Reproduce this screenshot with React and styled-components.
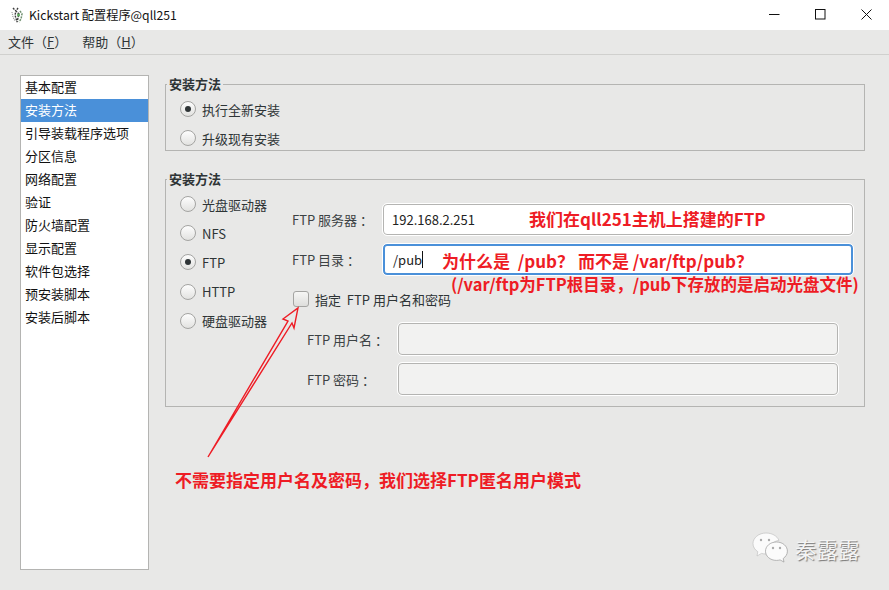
import React from 'react';
import styled, { createGlobalStyle } from 'styled-components';

const CJK = '"Noto Sans CJK SC", "Noto Sans", sans-serif';

const Global = createGlobalStyle`
  html, body { margin: 0; padding: 0; background: #e8e8e7; }
  body { font-family: ${CJK}; }
`;

const Window = styled.div`
  position: relative;
  width: 889px;
  height: 590px;
  overflow: hidden;
  background: #e8e8e7;
  color: #2e3436;
  font-size: 13px;
`;

const TitleBar = styled.div`
  display: flex;
  align-items: center;
  height: 30px;
  background: #fff;
  padding-left: 10px;
`;

const AppTitle = styled.span`
  margin: -1px 0 0 5px;
  font-size: 12.2px;
  color: #111;
  flex: 1;
`;

const WinButton = styled.div`
  display: flex;
  align-items: center;
  justify-content: center;
  width: 46px;
  height: 30px;
  margin-top: -2px;
`;

const MenuBar = styled.div`
  display: flex;
  align-items: center;
  gap: 15px;
  box-sizing: content-box;
  height: 22px;
  padding: 0 0 2px 8px;
  border-bottom: 1px solid #d0d0ce;
`;

const MenuItem = styled.span`
  font-size: 13px;
  color: #2e3436;
  u { text-decoration-thickness: 1px; }
`;

const Body = styled.div`
  display: flex;
  gap: 16px;
  padding: 20px 24px 0 20px;
`;

const Sidebar = styled.ul`
  list-style: none;
  margin: 0;
  padding: 0;
  width: 127px;
  height: 493px;
  background: #fff;
  border: 1px solid #b4b4b2;
`;

const SideItem = styled.li`
  display: flex;
  align-items: center;
  box-sizing: border-box;
  height: 23px;
  padding: 0 0 2px 4px;
  font-size: 13px;
  color: ${({ $active }) => ($active ? '#fff' : '#111')};
  background: ${({ $active }) => ($active ? '#4a90d9' : 'transparent')};
`;

const Main = styled.div`
  flex: 1;
  display: flex;
  flex-direction: column;
`;

const Group = styled.fieldset`
  margin: ${({ $top }) => $top}px 0 0;
  padding: 0;
  height: ${({ $height }) => $height}px;
  min-width: 0;
  box-sizing: border-box;
  border: 1px solid #b4b4b2;
`;

const Legend = styled.legend`
  margin-left: 1px;
  padding: 0 2px 2px;
  font-size: 13px;
  font-weight: 700;
  line-height: 15px;
  color: #2e3436;
`;

const RadioStack = styled.div`
  display: flex;
  flex-direction: column;
  gap: ${({ $gap }) => $gap}px;
  padding: ${({ $pad }) => $pad}px 0 0 14px;
  width: 110px;
  flex: none;
`;

const RadioRow = styled.div`
  display: flex;
  align-items: center;
  gap: 6px;
  height: 16px;
  font-size: 13px;
  white-space: nowrap;
`;

const RadioDot = styled.span`
  display: flex;
  align-items: center;
  justify-content: center;
  width: 16px;
  height: 16px;
  box-sizing: border-box;
  flex: none;
  border-radius: 50%;
  border: 1px solid #a4a4a2;
  background: linear-gradient(#fdfdfd, #e2e2e0);
  &::after {
    content: '';
    display: ${({ $on }) => ($on ? 'block' : 'none')};
    width: 6px;
    height: 6px;
    border-radius: 50%;
    background: #2e3436;
  }
`;

const InstallBody = styled.div`
  display: flex;
`;

const Form = styled.div`
  flex: 1;
  display: flex;
  flex-direction: column;
  padding: 16px 11px 0 0;
`;

const FieldRow = styled.div`
  display: flex;
  align-items: center;
  height: ${({ $h }) => $h}px;
  margin-top: ${({ $mt }) => $mt || 0}px;
  padding-left: ${({ $indent }) => $indent || 0}px;
  padding-right: ${({ $right }) => $right || 0}px;
`;

const FieldLabel = styled.label`
  width: 91px;
  flex: none;
  font-size: 13px;
  color: #3c4244;
  white-space: pre;
`;

const Input = styled.div`
  flex: 1;
  box-sizing: border-box;
  height: 100%;
  display: flex;
  align-items: center;
  padding-left: 8px;
  font-size: 13px;
  color: #222;
  background: ${({ $off }) => ($off ? '#f2f2f1' : '#fff')};
  border-style: solid;
  border-color: ${({ $focus }) => ($focus ? '#4a90d9' : '#b4b4b2')};
  border-width: ${({ $focus }) => ($focus ? 2 : 1)}px;
  border-radius: 4px;
  outline: 1px solid #fff;
  outline-offset: 0;
`;

const Caret = styled.span`
  display: inline-block;
  width: 1px;
  height: 17px;
  background: #111;
`;

const CheckRow = styled.div`
  display: flex;
  align-items: center;
  gap: 6px;
  height: 16px;
  margin: 16px 0 16px 3px;
  font-size: 13px;
  white-space: pre;
`;

const CheckBox = styled.span`
  width: 16px;
  height: 16px;
  box-sizing: border-box;
  border: 1px solid #a4a4a2;
  border-radius: 3px;
  background: linear-gradient(#f6f6f5, #dededc);
`;

const Note = styled.span`
  position: absolute;
  left: ${({ $x }) => $x}px;
  top: ${({ $y }) => $y}px;
  font-size: ${({ $size }) => $size || 17}px;
  line-height: 22px;
  font-weight: 700;
  color: #ee1c25;
  white-space: pre;
`;

const ArrowLayer = styled.svg`
  position: absolute;
  left: 0;
  top: 0;
  pointer-events: none;
`;

const Watermark = styled.div`
  position: absolute;
  left: 752px;
  top: 532px;
  display: flex;
  align-items: center;
  gap: 7px;
  font-size: 21.500px;
  color: #f4f4f4;
  text-shadow: 1px 1px 1px #777;
`;

const sideItems = ['基本配置', '安装方法', '引导装载程序选项', '分区信息', '网络配置', '验证', '防火墙配置', '显示配置', '软件包选择', '预安装脚本', '安装后脚本'];
const sources = ['光盘驱动器', 'NFS', 'FTP', 'HTTP', '硬盘驱动器'];

const AppIcon = () => (
  <svg width="14" height="18" viewBox="0 0 14 18">
    <path d="M3 2l3 3-1 4 2 7M8 2L6 5l3 3-2 8" stroke="#3d3d3d" strokeWidth="1.4" fill="none" strokeDasharray="2 1" />
    <path d="M10 5l2 3-1 5-2 3" stroke="#6f8f6f" strokeWidth="1.5" fill="none" strokeDasharray="2 1" />
    <path d="M2 6l1 5 2 4" stroke="#999" strokeWidth="1.2" fill="none" strokeDasharray="1 1" />
    <circle cx="8.500" cy="9" r="1.500" fill="#5aa55a" />
  </svg>
);

const WeChat = () => (
  <svg width="36" height="32" viewBox="0 0 36 32">
    <path d="M14 1C6.8 1 1 5.8 1 11.6c0 3.3 1.9 6.200 4.800 8.100L5 24l4.500-2.600c1.400.4 2.900.6 4.500.6 1 0 2-.1 2.900-.3C16.300 14 22 8.600 27 8.400 25.200 4 20 1 14 1z" fill="#fbfbfb" stroke="#bbb" strokeWidth=".6" />
    <path d="M24.500 10C18 10 13.500 14.300 13.500 19.200s4.500 9.200 11 9.200c1.300 0 2.500-.2 3.600-.5l3.900 2.200-.8-3.600c2.500-1.700 4.200-4.300 4.200-7.300C35.400 14.300 30.900 10 24.500 10z" fill="#fbfbfb" stroke="#999" strokeWidth=".7" />
    <circle cx="9" cy="8" r="1.200" fill="#aaa" />
    <circle cx="17" cy="8" r="1.200" fill="#aaa" />
    <circle cx="21" cy="16" r="1.200" fill="#aaa" />
    <circle cx="28" cy="16" r="1.200" fill="#aaa" />
  </svg>
);

const App = () => (
  <Window>
    <Global />
    <TitleBar>
      <AppIcon />
      <AppTitle>Kickstart 配置程序@qll251</AppTitle>
      <WinButton>
        <svg width="11" height="11" viewBox="0 0 11 11"><path d="M0 5.500h10.500" stroke="#111" /></svg>
      </WinButton>
      <WinButton>
        <svg width="11" height="11" viewBox="0 0 11 11"><rect x=".5" y=".5" width="9.500" height="9.500" fill="none" stroke="#111" /></svg>
      </WinButton>
      <WinButton>
        <svg width="11" height="11" viewBox="0 0 11 11"><path d="M.5.500l10 10M10.500.500l-10 10" stroke="#111" /></svg>
      </WinButton>
    </TitleBar>
    <MenuBar>
      <MenuItem>文件（<u>F</u>）</MenuItem>
      <MenuItem>帮助（<u>H</u>）</MenuItem>
    </MenuBar>
    <Body>
      <Sidebar>
        {sideItems.map((item, i) => <SideItem key={item} $active={i === 1}>{item}</SideItem>)}
      </Sidebar>
      <Main>
        <Group $top={1} $height={75}>
          <Legend>安装方法</Legend>
          <RadioStack $gap={13} $pad={8}>
            <RadioRow><RadioDot $on />执行全新安装</RadioRow>
            <RadioRow><RadioDot />升级现有安装</RadioRow>
          </RadioStack>
        </Group>
        <Group $top={20} $height={236}>
          <Legend>安装方法</Legend>
          <InstallBody>
            <RadioStack $gap={13.200} $pad={8}>
              {sources.map((s) => <RadioRow key={s}><RadioDot $on={s === 'FTP'} />{s}</RadioRow>)}
            </RadioStack>
            <Form>
              <FieldRow $indent={2} $h={31}>
                <FieldLabel>FTP 服务器 ：</FieldLabel>
                <Input>192.168.2.251</Input>
              </FieldRow>
              <FieldRow $indent={2} $h={31} $mt={9}>
                <FieldLabel>FTP 目录 ：</FieldLabel>
                <Input $focus>/pub<Caret /></Input>
              </FieldRow>
              <CheckRow>
                <CheckBox />
                <span>指定  FTP 用户名和密码</span>
              </CheckRow>
              <FieldRow $indent={17} $right={15} $h={32}>
                <FieldLabel>FTP 用户名 ：</FieldLabel>
                <Input $off />
              </FieldRow>
              <FieldRow $indent={17} $right={15} $h={32} $mt={8}>
                <FieldLabel>FTP 密码 ：</FieldLabel>
                <Input $off />
              </FieldRow>
            </Form>
          </InstallBody>
        </Group>
      </Main>
    </Body>
    <Note $x={529} $y={208}>我们在qll251主机上搭建的FTP</Note>
    <Note $x={442} $y={250}>为什么是  /pub？ 而不是 /var/ftp/pub？</Note>
    <Note $x={451} $y={273} $size={16.500}>(/var/ftp为FTP根目录，/pub下存放的是启动光盘文件)</Note>
    <Note $x={175} $y={469}>不需要指定用户名及密码，我们选择FTP匿名用户模式</Note>
    <ArrowLayer width="889" height="590">
      <path d="M208 457L288 321 283 319 298 308 294 328 292 323Z" fill="none" stroke="#ee1c25" strokeWidth="1.400" />
    </ArrowLayer>
    <Watermark>
      <WeChat />
      <span>秦露露</span>
    </Watermark>
  </Window>
);

export default App;
